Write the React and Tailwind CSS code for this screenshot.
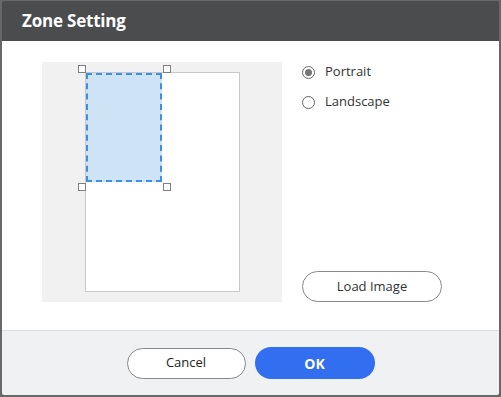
const font = { fontFamily: '"Open Sans", "Noto Sans", sans-serif' };

function Radio({ checked, label }) {
  return (
    <label className="flex h-[20px] items-center gap-[10px] text-[13px] text-[#333]">
      <span className="flex h-[13px] w-[13px] items-center justify-center rounded-full border border-[#666] bg-white">
        {checked && <span className="h-[7px] w-[7px] rounded-full bg-[#777]" />}
      </span>
      {label}
    </label>
  );
}

function Handle({ className }) {
  return <span className={"absolute h-[8px] w-[8px] border border-[#808080] bg-white " + className} />;
}

export default function App() {
  return (
    <div className="h-[397px] w-[501px] bg-[#686868] pl-[2px] pr-[2px] pt-[1px]" style={font}>
      <div className="flex h-[394px] w-[497px] flex-col overflow-hidden rounded-[2px]">
        <div className="flex h-[40px] items-center bg-[#4b4c4e] pl-[20px] pb-[1px]">
          <h2 className="text-[17px] font-bold tracking-[-0.2px] text-white">Zone Setting</h2>
        </div>
        <div className="flex flex-1 gap-[20px] bg-white pl-[40px] pt-[21px]">
          <div className="h-[240px] w-[240px] bg-[#f1f1f1] pl-[43px] pt-[10px]">
            <div className="h-[220px] w-[155px] border border-[#c8c8c8] bg-white">
              <div className="relative h-[109px] w-[76px] border-2 border-dashed border-[#3d8fe3] bg-[#cfe3f7]">
                <Handle className="-left-[10px] -top-[10px]" />
                <Handle className="-right-[11px] -top-[10px]" />
                <Handle className="-left-[10px] -bottom-[11px]" />
                <Handle className="-right-[11px] -bottom-[11px]" />
              </div>
            </div>
          </div>
          <div className="flex h-[240px] w-[140px] flex-col justify-between">
            <div className="flex flex-col gap-[10px]">
              <Radio checked label="Portrait" />
              <Radio label="Landscape" />
            </div>
            <button className="h-[31px] w-[140px] rounded-full border border-[#888] bg-white text-[13px] text-[#333]">
              Load Image
            </button>
          </div>
        </div>
        <div className="flex h-[65px] items-center justify-center gap-[9px] border-t border-[#dcdde0] bg-[#f0f1f3]">
          <button className="h-[31px] w-[119px] rounded-full border border-[#888] bg-white text-[13px] text-[#222]">
            Cancel
          </button>
          <button className="h-[32px] w-[120px] rounded-full bg-[#316ff0] text-[14px] font-bold text-white">
            OK
          </button>
        </div>
      </div>
    </div>
  );
}
